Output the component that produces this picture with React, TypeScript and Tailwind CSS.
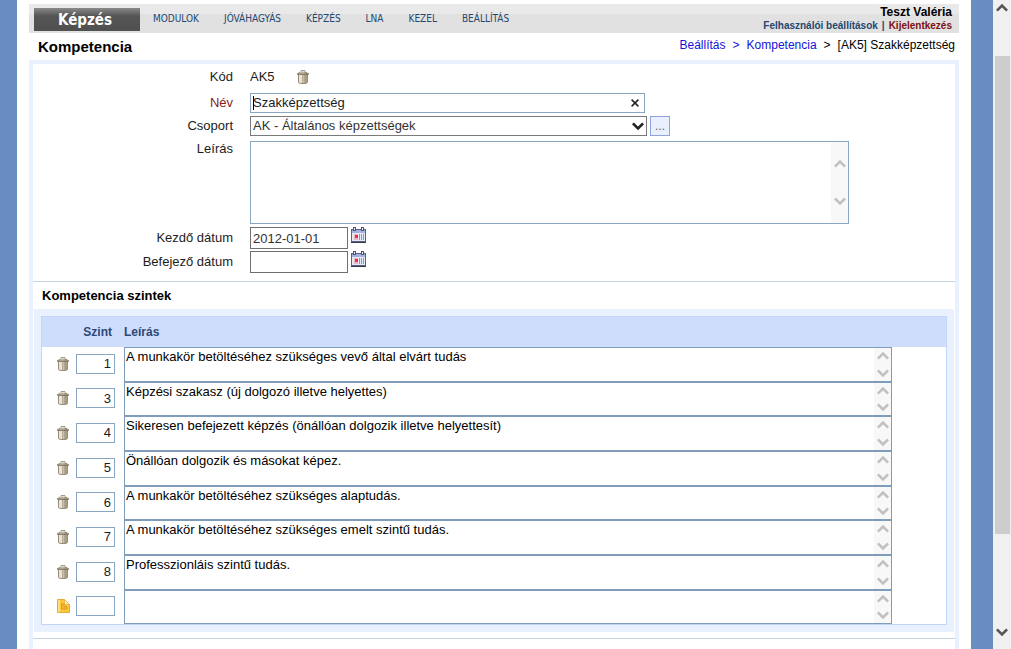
import { useState } from "react";
import type { ReactNode } from "react";

const menuItems = ["MODULOK", "JÓVÁHAGYÁS", "KÉPZÉS", "LNA", "KEZEL", "BEÁLLÍTÁS"];

const levels = [
  { level: "1", text: "A munkakör betöltéséhez szükséges vevő által elvárt tudás" },
  { level: "3", text: "Képzési szakasz (új dolgozó illetve helyettes)" },
  { level: "4", text: "Sikeresen befejezett képzés (önállóan dolgozik illetve helyettesít)" },
  { level: "5", text: "Önállóan dolgozik és másokat képez." },
  { level: "6", text: "A munkakör betöltéséhez szükséges alaptudás." },
  { level: "7", text: "A munkakör betöltéséhez szükséges emelt szintű tudás." },
  { level: "8", text: "Professzionláis szintű tudás." },
  { level: "", text: "" },
];

function Chevron({ up = false, className }: { up?: boolean; className: string }) {
  return (
    <svg viewBox="0 0 12 9" className={className} fill="none" stroke="currentColor" strokeWidth="2.6" aria-hidden="true">
      <path d={up ? "M0.9 7.6 6 2.5l5.1 5.1" : "M0.9 1.4 6 6.5l5.1-5.1"} />
    </svg>
  );
}

function TrashIcon() {
  return (
    <svg viewBox="0 0 12 14" className="block h-[14px] w-[12px]" aria-hidden="true">
      <path d="M4 1.5V.6h4v.9" fill="none" stroke="#9b927c" />
      <path d="M1.5 4h9v8.300c0 .8-1.500 1.200-4.500 1.200s-4.500-.4-4.500-1.200z" fill="#c9c0a8" />
      <path d="M2 4h1v9H2zM3 4h2v9.400H3z" fill="#e9e4d4" />
      <path d="M7.500 4H10v8.800l-2.500.6z" fill="#a89e86" />
      <path d="M1.500 4v8.300c0 .8 1.500 1.200 4.500 1.200s4.500-.4 4.500-1.200V4" fill="none" stroke="#8b826e" strokeWidth=".9" />
      <path d="M5.500 5v7.500M7.500 5v7.500" stroke="#a79e88" strokeWidth=".6" />
      <path d="M0 3h1l1.500-1.300h7L11 3h1v1.500H0z" fill="#9c937d" />
      <path d="M2 3.200l1-.8h4.500v.8z" fill="#e0dac8" />
      <path d="M.5 4.500h11" stroke="#716957" strokeWidth=".7" />
    </svg>
  );
}

function CalendarIcon() {
  return (
    <svg viewBox="0 0 15 16" className="block h-[16px] w-[15px]" aria-hidden="true">
      <path d="M0 2h15v14H0z" fill="#5a6284" />
      <path d="M1 3h13v3H1z" fill="#a5b3dc" />
      <path d="M1 6h13v8H1z" fill="#e6e9f6" />
      <path d="M0 15h15v1H0z" fill="#343a52" />
      <path d="M2 0h3v4H2zM10 0h3v4h-3z" fill="#4a5374" />
      <path d="M3 1h1v2H3zM11 1h1v2h-1z" fill="#eef1fa" />
      <path d="M8 7h1v6H8zM10 7h1v6h-1zM12 7h1v6h-1z" fill="#9098bd" />
      <path d="M3 7h4v6H3z" fill="#efb6bd" />
      <path d="M4 8h3v3H4z" fill="#e8343a" />
    </svg>
  );
}

function NewIcon() {
  return (
    <svg viewBox="0 0 13 14" className="block h-[14px] w-[13px]" aria-hidden="true">
      <path d="M.5.500h7l5 5v8H.5z" fill="#f9c840" stroke="#e4aa38" />
      <path d="M7.500.500v5h5z" fill="#fdeeb0" stroke="#e4b04a" strokeWidth=".7" />
      <path d="M1 1h2v12H1z" fill="#fddd80" />
      <path d="M4.500 4v6h5.500V7.500H7V4" fill="#f4b52a" stroke="#dc981c" strokeWidth=".9" />
    </svg>
  );
}

function ScrollStrip({ tall = false }: { tall?: boolean }) {
  return (
    <div className={`flex w-[17px] shrink-0 flex-col items-center bg-[#f8f8f8] text-[#c1c1c1] ${tall ? "justify-center gap-[29px]" : "justify-between py-[3px]"}`}>
      <Chevron up className="h-[9px] w-[12px]" />
      <Chevron className="h-[9px] w-[12px]" />
    </div>
  );
}

function Row({ label, htmlFor, className = "h-6 items-center", labelClass = "", children }: {
  label: string;
  htmlFor?: string;
  className?: string;
  labelClass?: string;
  children: ReactNode;
}) {
  return (
    <div className={`grid grid-cols-[200px_1fr] gap-x-[17px] ${className}`}>
      {htmlFor ? (
        <label htmlFor={htmlFor} className={`text-right ${labelClass}`}>{label}</label>
      ) : (
        <span className="text-right">{label}</span>
      )}
      {children}
    </div>
  );
}

function DateField({ id, initial }: { id: string; initial: string }) {
  return (
    <div className="flex items-start gap-[3px]">
      <input id={id} defaultValue={initial} className="h-[22px] w-[98px] border border-[#6f6f6f] bg-white px-[2px] text-[#333] outline-none" />
      <button type="button" aria-label="Naptár">
        <CalendarIcon />
      </button>
    </div>
  );
}

export default function App() {
  const [name, setName] = useState("Szakképzettség");

  return (
    <div className="flex min-h-screen bg-[#678dc1] font-['Liberation_Sans',Arial,sans-serif] text-[13px] leading-4 text-[#1c1c1c]">
      <div className="ml-[17px] mr-[22px] flex min-w-0 flex-1 flex-col bg-white px-3 pt-1">
        <header className="flex h-[29px] items-center bg-linear-to-b from-[#e9e9e9] from-35% to-[#e1e1e1] to-35% pl-[5px] pr-[7px]">
          <div className="mb-[2px] flex h-[23px] w-[106px] items-center self-end bg-linear-to-b from-[#8a8a8a] via-[#555] via-35% to-[#505050] pl-6 font-['DejaVu_Sans_Condensed','DejaVu_Sans',sans-serif] text-[15px] font-bold text-white">
            Képzés
          </div>
          <nav className="ml-[13px] flex gap-[25px] font-['DejaVu_Sans_Condensed','DejaVu_Sans',sans-serif] text-[10px] text-[#24476f]">
            {menuItems.map((item) => (
              <a key={item} href="#">{item}</a>
            ))}
          </nav>
          <div className="ml-auto text-right">
            <div className="text-[12px] font-bold leading-[14px] text-black">Teszt Valéria</div>
            <div className="flex justify-end gap-1 text-[10px] font-bold leading-[14px] text-[#24476f]">
              <a href="#">Felhasználói beállítások</a>
              <span>|</span>
              <a href="#" className="text-[#7d1010]">Kijelentkezés</a>
            </div>
          </div>
        </header>

        <div className="flex h-[27px] items-center justify-between pl-[9px] pr-1">
          <h1 className="text-[15px] font-bold text-black">Kompetencia</h1>
          <nav className="mb-1 flex gap-[7px] text-[12px] text-black">
            <a href="#" className="text-[#1414d8]">Beállítás</a>
            <span className="text-[#1414d8]">&gt;</span>
            <a href="#" className="text-[#1414d8]">Kompetencia</a>
            <span>&gt;</span>
            <span>[AK5] Szakképzettség</span>
          </nav>
        </div>

        <main className="flex flex-1 flex-col border-4 border-b-0 border-[#e8f1fd]">
          <form className="pb-[7px]">
            <Row label="Kód" className="h-[27px] items-center pb-[2px]">
              <div className="flex items-center gap-[22px]">
                <span>AK5</span>
                <button type="button" aria-label="Törlés">
                  <TrashIcon />
                </button>
              </div>
            </Row>
            <Row label="Név" htmlFor="name" labelClass="text-[#8b1a1a]">
              <div className="relative flex h-5 w-[395px] border border-[#8ba6c1]">
                <input id="name" value={name} onChange={(e) => setName(e.target.value)} className="min-w-0 flex-1 px-[2px] outline-none" />
                <span className="absolute left-[2px] top-[2px] h-[14px] w-px bg-black" />
                <button type="button" aria-label="Mező törlése" onClick={() => setName("")} className="flex w-[18px] items-center justify-center">
                  <svg viewBox="0 0 8 8" className="h-2 w-2" stroke="#222" strokeWidth="1.5" aria-hidden="true">
                    <path d="M.6.6l6.8 6.8M7.4.6.6 7.4" />
                  </svg>
                </button>
              </div>
            </Row>
            <Row label="Csoport" htmlFor="group" className="h-6 items-center pb-[2px]">
              <div className="flex gap-[3px]">
                <div className="relative w-[397px]">
                  <select id="group" className="block h-5 w-full appearance-none border border-[#7a7a7a] bg-white px-[2px] text-[#333] outline-none">
                    <option>AK - Általános képzettségek</option>
                  </select>
                  <Chevron className="pointer-events-none absolute right-[3px] top-[6px] h-[9px] w-[12px] text-[#222]" />
                </div>
                <button type="button" className="h-5 w-5 border border-[#8fa6dc] bg-[#e9effc] text-[12px] text-[#666]">...</button>
              </div>
            </Row>
            <Row label="Leírás" htmlFor="description" className="py-[2px]">
              <div className="flex h-[83px] w-[599px] border border-[#8ba6c1]">
                <textarea id="description" className="min-w-0 flex-1 resize-none overflow-hidden px-[2px] outline-none" />
                <ScrollStrip tall />
              </div>
            </Row>
            <Row label="Kezdő dátum" htmlFor="start">
              <DateField id="start" initial="2012-01-01" />
            </Row>
            <Row label="Befejező dátum" htmlFor="end">
              <DateField id="end" initial="" />
            </Row>
          </form>

          <section className="border-y border-[#c5d3e3] pb-[6px]">
            <h2 className="flex h-[27px] items-center pl-[9px] text-[13px] font-bold text-black">Kompetencia szintek</h2>
            <div className="mx-px bg-[#e8f1fd] px-[7px] pb-[7px] pt-[7px]">
              <div className="border border-[#c3d6f5] bg-white">
                <table className="w-full table-fixed border-collapse">
                  <colgroup>
                    <col className="w-[34px]" />
                    <col className="w-[48px]" />
                    <col />
                  </colgroup>
                  <thead>
                    <tr className="h-[30px] bg-[#cdddfb] text-[12px] text-[#2d4878]">
                      <th className="p-0" />
                      <th className="p-0 pr-3 text-right">Szint</th>
                      <th className="p-0 text-left">Leírás</th>
                    </tr>
                  </thead>
                  <tbody>
                    {levels.map((row, i) => (
                      <tr key={i} className="group h-[35px] nth-[3n+2]:h-[34px]">
                        <td className="p-0 pb-[2px] pl-[15px]">
                          <button type="button" className="block" aria-label={row.level ? "Törlés" : "Új szint"}>
                            {row.level ? <TrashIcon /> : <NewIcon />}
                          </button>
                        </td>
                        <td className="p-0 pb-[2px]">
                          <input aria-label="Szint" defaultValue={row.level} className="block h-5 w-[39px] border border-[#8ba6c1] bg-white px-[3px] text-right outline-none" />
                        </td>
                        <td className="p-0 pr-[54px]">
                          <div className="flex h-[35px] border border-[#7f9db9] group-nth-[3n+2]:h-[34px]">
                            <textarea aria-label="Leírás" defaultValue={row.text} className="min-w-0 flex-1 resize-none overflow-hidden px-px pt-px text-black outline-none" />
                            <ScrollStrip />
                          </div>
                        </td>
                      </tr>
                    ))}
                  </tbody>
                </table>
              </div>
            </div>
          </section>
        </main>
      </div>

      <div className="flex w-[18px] flex-col items-center bg-[#f0f0f0] pb-3 pt-[3px] text-[#555]" aria-hidden="true">
        <Chevron up className="h-[9px] w-[12px]" />
        <div className="mt-11 w-[15px] grow-[478] bg-[#cdcdcd]" />
        <div className="grow-[94]" />
        <Chevron className="h-[9px] w-[12px]" />
      </div>
    </div>
  );
}
